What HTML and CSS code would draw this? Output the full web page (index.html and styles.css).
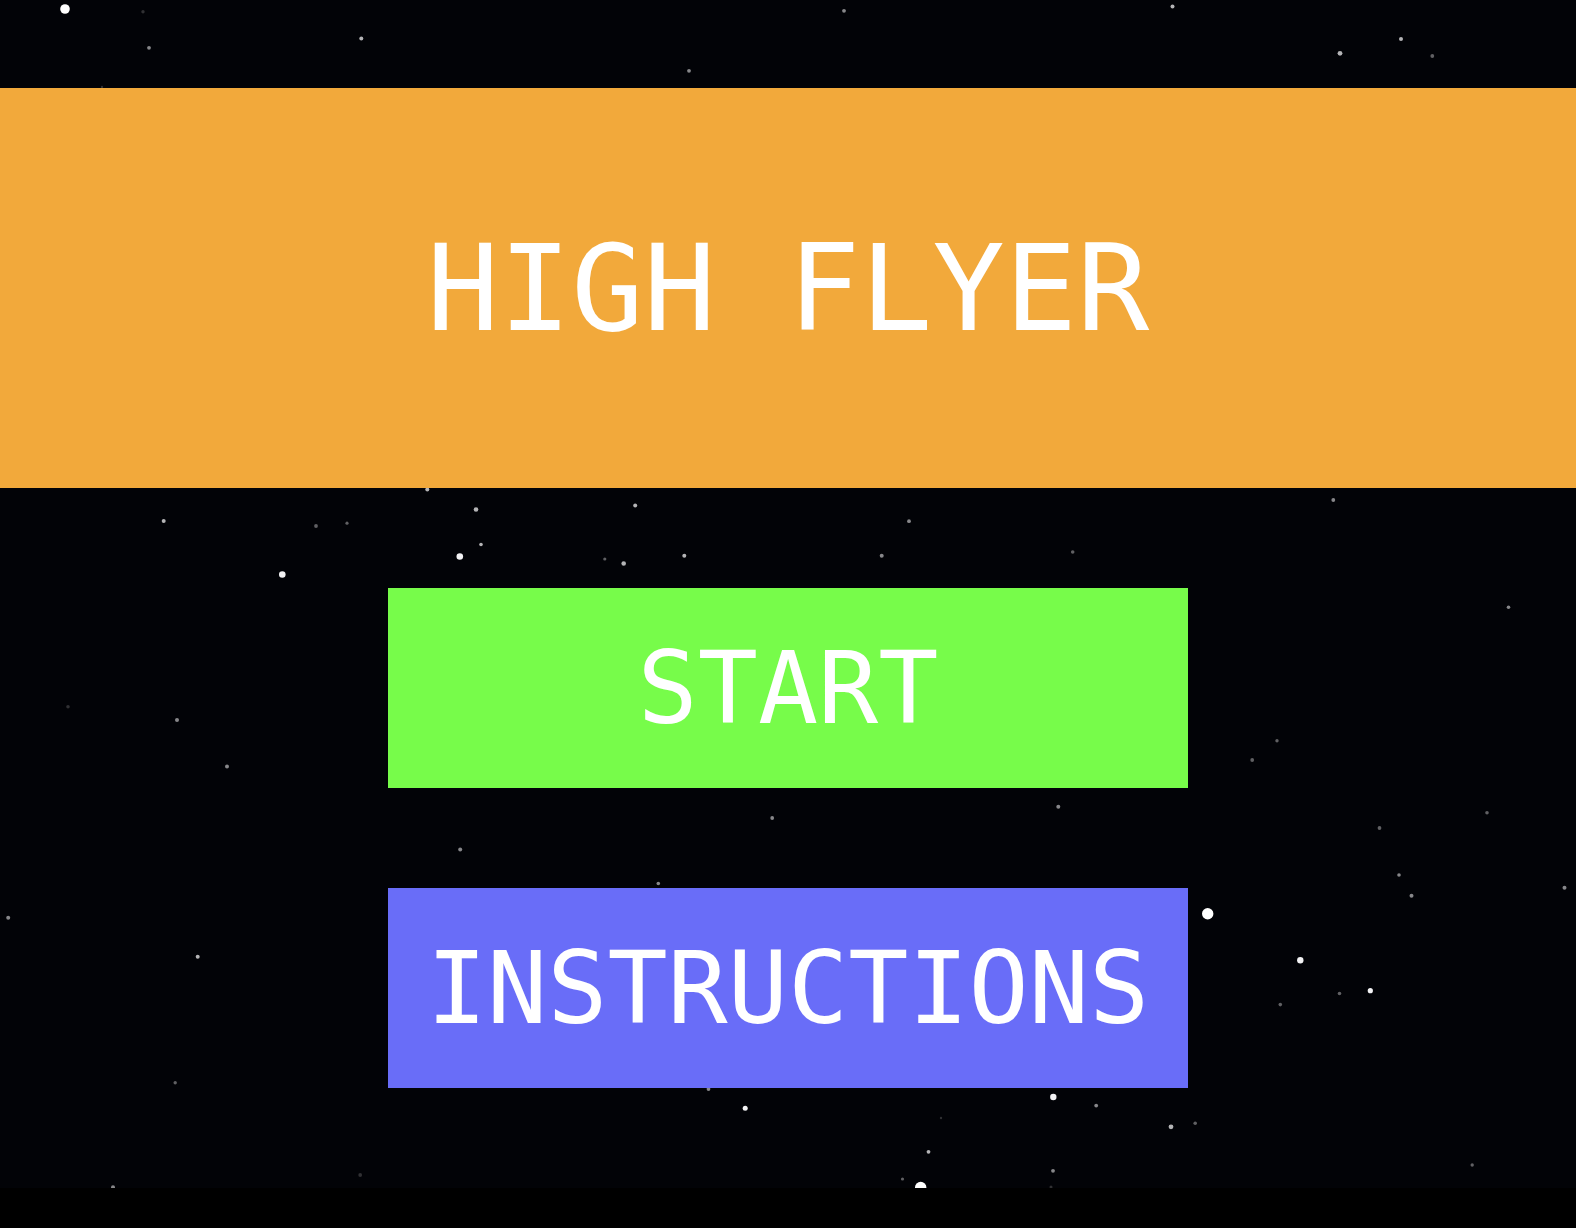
FILE: index.html
```html
<!DOCTYPE html>
<html lang="en">
<head>
<meta charset="utf-8">
<meta name="viewport" content="width=device-width, initial-scale=1">
<title>High Flyer</title>
<link rel="stylesheet" href="styles.css">
</head>
<body>
<main class="sky">
  <svg class="stars" viewBox="0 0 1576 1188" preserveAspectRatio="xMidYMid slice" aria-hidden="true">
    <g class="stars-large">
      <circle cx="65" cy="9" r="4.8"/><circle cx="1207.7" cy="913.7" r="5.7"/><circle cx="920.7" cy="1187.5" r="5.7"/>
    </g>
    <g class="stars-medium">
      <circle cx="459.8" cy="556.5" r="3.3"/><circle cx="282.3" cy="574.5" r="3.3"/><circle cx="1300.3" cy="960.3" r="3.2"/>
      <circle cx="1053.3" cy="1097" r="3.2"/><circle cx="1370.3" cy="990.7" r="2.6"/><circle cx="745.2" cy="1108.2" r="2.5"/>
    </g>
    <g class="stars-small">
      <circle cx="1340" cy="53.3" r="2.4"/><circle cx="1171" cy="1126.8" r="2.4"/><circle cx="476" cy="509.5" r="2.3"/>
      <circle cx="623.7" cy="563.5" r="2.3"/><circle cx="1401" cy="39" r="2"/><circle cx="1172.5" cy="6.5" r="2"/>
      <circle cx="361.3" cy="38.5" r="2"/><circle cx="163.7" cy="521" r="2"/><circle cx="635.2" cy="505.5" r="2"/>
      <circle cx="684.3" cy="555.7" r="2"/><circle cx="197.7" cy="956.7" r="2"/><circle cx="427.3" cy="489.5" r="2"/>
      <circle cx="481" cy="544.5" r="1.8"/><circle cx="928.5" cy="1151.8" r="1.9"/>
    </g>
    <g class="stars-dim">
      <circle cx="149" cy="47.8" r="1.9"/><circle cx="689" cy="70.8" r="1.9"/><circle cx="844" cy="10.8" r="1.9"/>
      <circle cx="177" cy="720" r="2"/><circle cx="227" cy="766.5" r="2"/><circle cx="909" cy="521.2" r="1.9"/>
      <circle cx="881.7" cy="555.7" r="2"/><circle cx="1333.3" cy="500" r="1.9"/><circle cx="1508.5" cy="607.2" r="1.8"/>
      <circle cx="460.2" cy="849.5" r="2"/><circle cx="8.2" cy="917.7" r="2"/><circle cx="772.2" cy="818" r="1.9"/>
      <circle cx="1058.3" cy="806.8" r="2"/><circle cx="658.3" cy="883.5" r="1.8"/><circle cx="1399" cy="875" r="1.8"/>
      <circle cx="1411.5" cy="895.7" r="2"/><circle cx="1564.5" cy="887.8" r="2"/><circle cx="1096.2" cy="1105.6" r="1.9"/>
      <circle cx="1053" cy="1170.8" r="1.9"/><circle cx="113" cy="1187.3" r="2"/><circle cx="708.5" cy="1089" r="1.9"/>
    </g>
    <g class="stars-faint">
      <circle cx="1432.3" cy="56" r="1.9"/><circle cx="316" cy="526" r="1.9"/><circle cx="347" cy="523.2" r="1.6"/>
      <circle cx="604.8" cy="559" r="1.6"/><circle cx="1072.7" cy="552" r="1.8"/><circle cx="1277" cy="740.7" r="1.7"/>
      <circle cx="1252.2" cy="760" r="1.9"/><circle cx="1487" cy="812.7" r="1.8"/><circle cx="1379.5" cy="828" r="1.9"/>
      <circle cx="1339.5" cy="993.5" r="1.8"/><circle cx="1280.3" cy="1004.6" r="1.8"/><circle cx="175.2" cy="1082.8" r="1.7"/>
      <circle cx="1195.2" cy="1123.3" r="1.8"/><circle cx="1472.2" cy="1165" r="1.7"/><circle cx="902.5" cy="1179" r="1.6"/>
    </g>
    <g class="stars-distant">
      <circle cx="143" cy="11.8" r="1.7"/><circle cx="68" cy="706.8" r="1.8"/><circle cx="360.2" cy="1175" r="1.9"/>
      <circle cx="941" cy="1118" r="1.2"/><circle cx="1051" cy="1187" r="1.5"/><circle cx="102" cy="87" r="1.2"/>
    </g>
  </svg>
  <header class="banner">
    <h1 class="title">HIGH FLYER</h1>
  </header>
  <button class="menu-button start" type="button">START</button>
  <button class="menu-button instructions" type="button">INSTRUCTIONS</button>
</main>
</body>
</html>
```

FILE: styles.css
```css
* {
  box-sizing: border-box;
}

body {
  margin: 0;
  min-height: 100vh;
  background: #000;
  color: #fff;
  font-family: "DejaVu Sans Mono", monospace;
}

.sky {
  position: relative;
  display: flex;
  flex-direction: column;
  align-items: center;
  gap: 100px;
  padding: 88px 0 100px;
  background: #020307;
  overflow: hidden;
}

/* Star field behind the menu */
.stars {
  position: absolute;
  inset: 0;
  width: 100%;
  height: 100%;
}

.stars-large {
  fill: #fff;
}

.stars-medium {
  fill: #f2f2f4;
}

.stars-small {
  fill: #b4b4b6;
}

.stars-dim {
  fill: #87878a;
}

.stars-faint {
  fill: #606063;
}

.stars-distant {
  fill: #303033;
}

.banner,
.menu-button {
  position: relative;
  display: flex;
  align-items: center;
  justify-content: center;
}

.banner {
  width: 100%;
  min-height: 400px;
  background: #f2a93b;
}

.title {
  margin: 0;
  font-size: 120px;
  font-weight: 400;
  text-align: center;
}

.menu-button {
  width: 800px;
  max-width: 100%;
  min-height: 200px;
  padding: 0;
  border: 0;
  color: inherit;
  font-family: inherit;
  font-size: 100px;
  cursor: pointer;
}

.start {
  background: #77fc4a;
}

.instructions {
  background: #696df8;
}
```
